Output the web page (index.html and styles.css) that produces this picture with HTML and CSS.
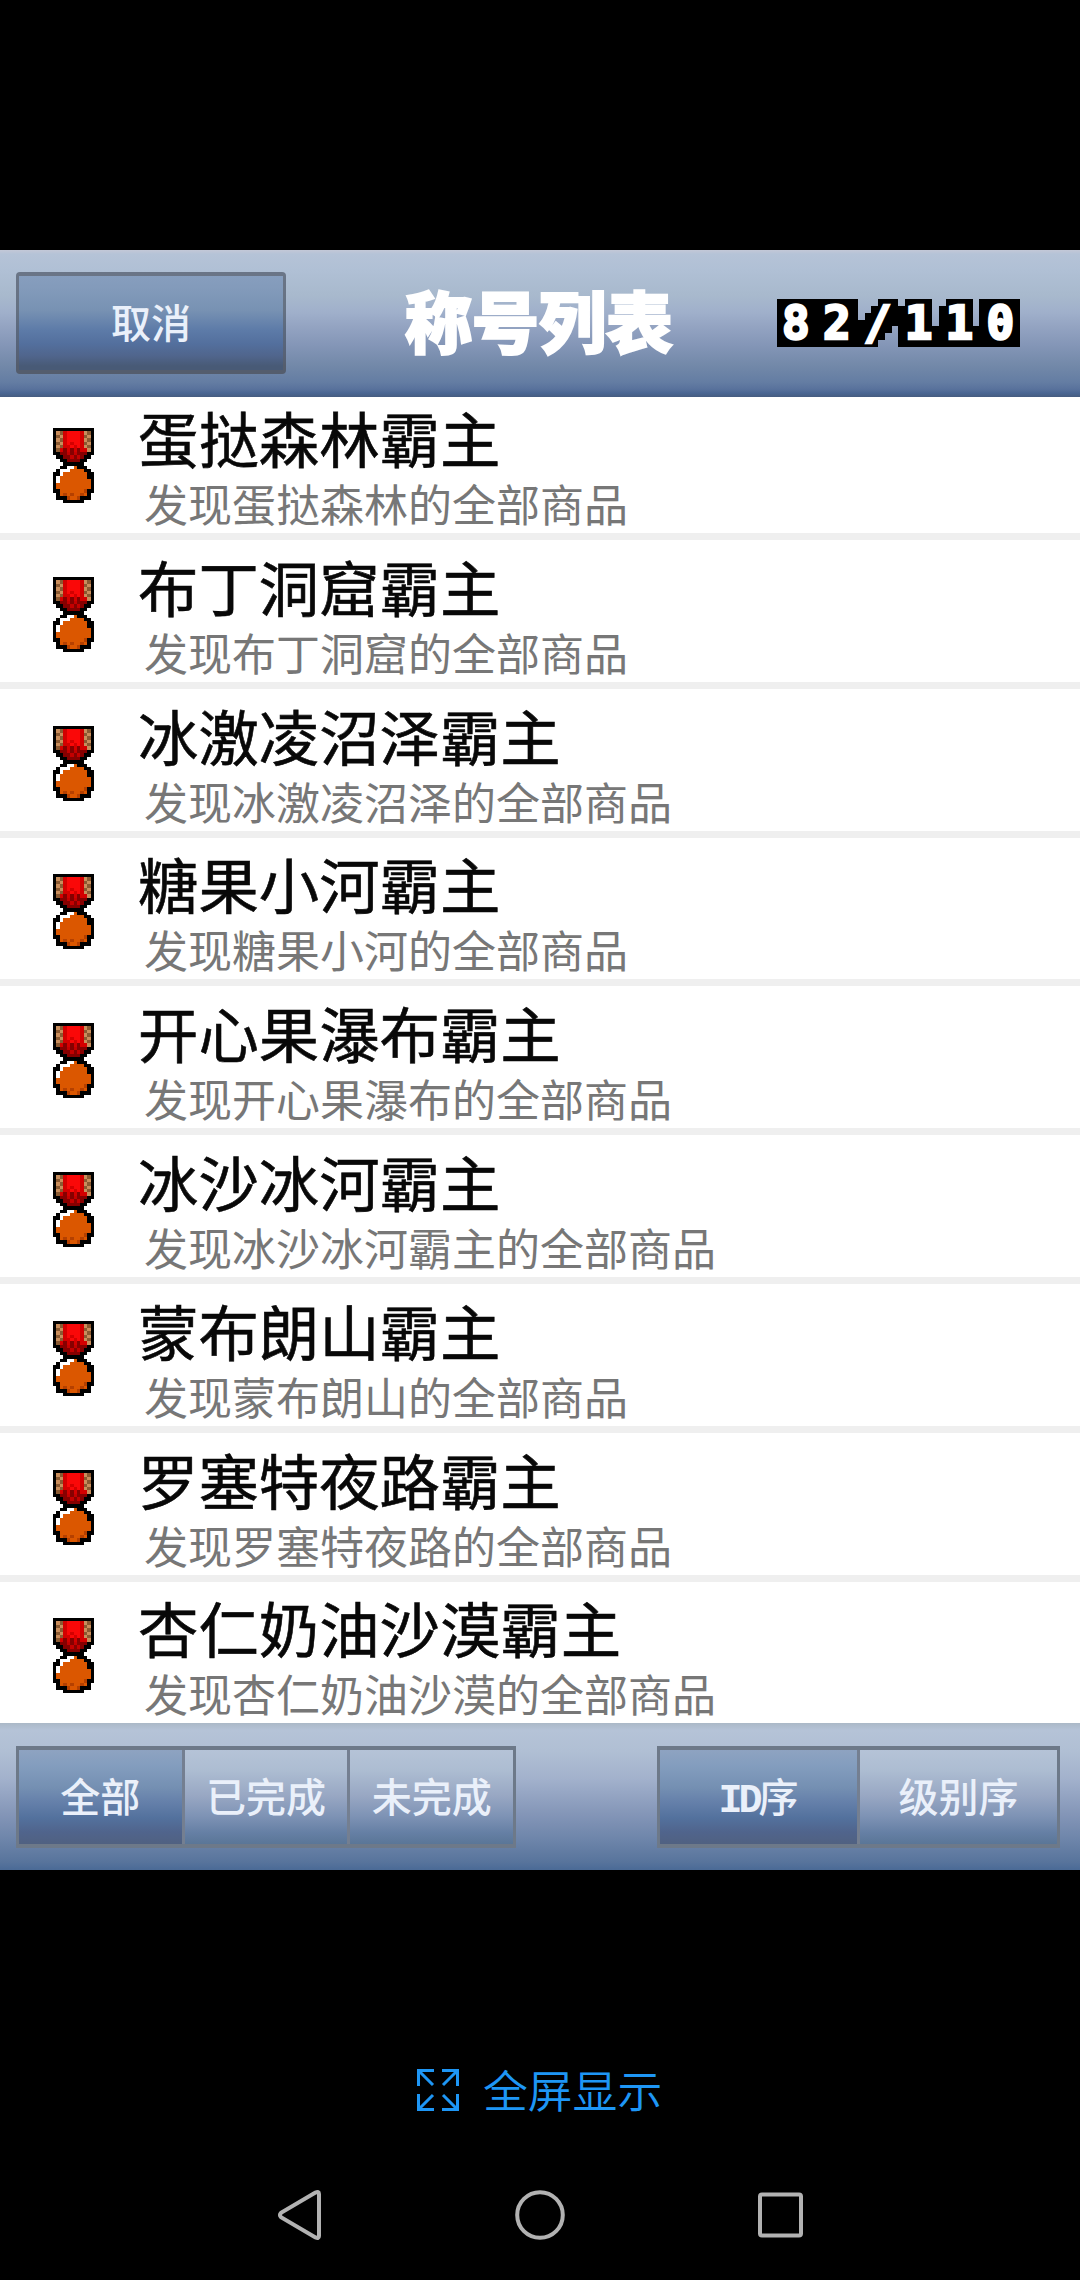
FILE: index.html
```html
<!DOCTYPE html>
<html lang="zh-CN">
<head>
<meta charset="utf-8">
<title>称号列表</title>
<link rel="stylesheet" href="styles.css">
</head>
<body>
<svg class="defs" width="0" height="0" aria-hidden="true">
<symbol id="medal" viewBox="0 0 12 22" preserveAspectRatio="none" shape-rendering="crispEdges">
<path fill="#000" d="M0 0h12v8h-1v1h-1v1H9v1h1v1h1v1h1v6h-1v2h-2v1H3v-1H1v-2H0v-6h1v-1h1v-1h1v-1H2V9H1V8H0z"/>
<path fill="#fa0808" d="M3 1h6v6H3z"/>
<path fill="#c98e5c" d="M1 1h2v5H2v1H1zM9 1h2v6h-1V6H9z"/>
<path fill="#8a5a32" d="M2 1h1v1H2zM1 2h1v1H1zM2 3h1v1H2zM1 4h1v1H1zM2 5h1v1H2zM1 6h1v1H1zM10 1h1v1h-1zM9 2h1v1H9zM10 3h1v1h-1zM9 4h1v1H9zM10 5h1v1h-1z"/>
<path fill="#d40000" d="M3 1h1v5H3zM8 1h1v5H8zM5 4h1v1H5zM4 5h1v1H4zM6 5h1v1H6zM2 6h8v1H2z"/>
<path fill="#860000" d="M3 6h1v1H3zM5 6h1v1H5zM7 6h1v1H7zM2 7h8v1H9v1H8v1H4V9H3V8H2z"/>
<path fill="#c40000" d="M4 7h1v1H4zM6 7h1v1H6zM5 8h1v1H5zM7 8h1v1H7z"/>
<path fill="#db5700" d="M4 12h5v1h1v2h1v3h-1v2H8v1H4v-1H2v-2H1v-4h1v-1h2zM6 11h1v1H6z"/>
<path fill="#fff" d="M4 11h2v1H4zM2 12h3v1H2zM2 13h1v1H2zM1 14h1v2H1z"/>
<path fill="#b54000" d="M4 20h1v1H4zM5 19h1v1H5zM7 20h1v1H7zM9 18h1v1H9zM8 19h1v1H8zM3 19h1v1H3z"/>
</symbol>
</svg>
<header class="bar top">
<button class="cancel">取消</button>
<h1>称号列表</h1>
<div class="count">82/110</div>
</header>
<main class="list">
<section class="row"><svg class="medal"><use href="#medal"/></svg><div><h2>蛋挞森林霸主</h2><p>发现蛋挞森林的全部商品</p></div></section>
<section class="row"><svg class="medal"><use href="#medal"/></svg><div><h2>布丁洞窟霸主</h2><p>发现布丁洞窟的全部商品</p></div></section>
<section class="row"><svg class="medal"><use href="#medal"/></svg><div><h2>冰激凌沼泽霸主</h2><p>发现冰激凌沼泽的全部商品</p></div></section>
<section class="row"><svg class="medal"><use href="#medal"/></svg><div><h2>糖果小河霸主</h2><p>发现糖果小河的全部商品</p></div></section>
<section class="row"><svg class="medal"><use href="#medal"/></svg><div><h2>开心果瀑布霸主</h2><p>发现开心果瀑布的全部商品</p></div></section>
<section class="row"><svg class="medal"><use href="#medal"/></svg><div><h2>冰沙冰河霸主</h2><p>发现冰沙冰河霸主的全部商品</p></div></section>
<section class="row"><svg class="medal"><use href="#medal"/></svg><div><h2>蒙布朗山霸主</h2><p>发现蒙布朗山的全部商品</p></div></section>
<section class="row"><svg class="medal"><use href="#medal"/></svg><div><h2>罗塞特夜路霸主</h2><p>发现罗塞特夜路的全部商品</p></div></section>
<section class="row"><svg class="medal"><use href="#medal"/></svg><div><h2>杏仁奶油沙漠霸主</h2><p>发现杏仁奶油沙漠的全部商品</p></div></section>
</main>
<footer class="bar bottom">
<div class="tabs filter"><button class="on">全部</button><button>已完成</button><button>未完成</button></div>
<div class="tabs sort"><button class="on"><span class="latin">ID</span>序</button><button>级别序</button></div>
</footer>
<div class="full">
<svg width="42" height="42" viewBox="0 0 42 42" fill="none" stroke="#1e96f5" stroke-width="3"><path d="M1.500 17V1.500H17M1.500 1.500L16 16M25 1.500H40.500V17M40.500 1.500L26 16M1.500 25V40.500H17M1.500 40.500L16 26M25 40.500H40.500V25M40.500 40.500L26 26"/></svg>
<span>全屏显示</span>
</div>
<nav class="nav">
<svg width="50" height="54" viewBox="0 0 50 54"><path d="M43.500 4.600L9 24.800Q7 27 9 29.200L43.500 49.400Q47 51 47 48V6Q47 3 43.500 4.600Z"/></svg>
<svg width="54" height="54" viewBox="0 0 54 54"><ellipse cx="27" cy="27" rx="22.800" ry="22.800"/></svg>
<svg width="50" height="54" viewBox="0 0 50 54"><rect x="2" y="6.500" width="41" height="41" rx="2"/></svg>
</nav>
</body>
</html>
```
FILE: styles.css
```css
* { box-sizing: border-box; }
body {
  margin: 0;
  width: 1080px;
  height: 2280px;
  padding-top: 250px;
  background: #000;
  overflow: hidden;
  font-family: "Noto Sans CJK SC", sans-serif;
}
.defs { display: block; height: 0; }
h1, h2, p { margin: 0; }
button {
  margin: 0;
  padding: 0 0 4px;
  border: 0;
  background: none;
  color: #eaf0fa;
  font: 500 40px/1 "Noto Sans CJK SC", sans-serif;
}
.bar { display: flex; align-items: flex-start; }
.top {
  height: 147px;
  padding: 22px 0 0 16px;
  background: linear-gradient(#c3c8d7 0, #b5c3d7 4px, #b0c0d5 20px, #a8b9cd 45px, #a0b0cb 62px, #94a4c2 76px, #8496b7 95px, #7389a9 115px, #647da3 132px, #59729c 139px, #4a6693 143px, #465c80 147px);
}
.cancel {
  width: 270px;
  height: 102px;
  border: 3px solid rgba(90, 96, 105, .65);
  border-width: 4px 3px;
  border-radius: 4px;
  background: linear-gradient(#889fbf 0, #829aba 18px, #7892b3 38px, #5d7ba8 58px, #536f9d 72px, #50658c 84px, #485a76 94px) border-box;
}
.top h1 {
  width: 270px;
  margin: 12px 0 0 119px;
  color: #fff;
  font-size: 67px;
  line-height: 70px;
  font-weight: 900;
  -webkit-text-stroke: 2px #fff;
  white-space: nowrap;
}
.count {
  width: 243px;
  height: 48px;
  margin: 27px 0 0 102px;
  padding-left: 5px;
  color: #fff;
  background: #000;
  font: bold 46px/48px "DejaVu Sans Mono", monospace;
  letter-spacing: 13.200px;
  white-space: nowrap;
  -webkit-text-stroke: 2.500px #fff;
  clip-path: polygon(0 0, 81px 0, 81px 21px, 88px 21px, 88px 14px, 94px 14px, 94px 7px, 101px 7px, 101px 0, 121px 0, 121px 7px, 128px 7px, 128px 0, 155px 0, 155px 27px, 162px 27px, 162px 7px, 169px 7px, 169px 0, 196px 0, 196px 27px, 202px 27px, 202px 0, 243px 0, 243px 48px, 121px 48px, 121px 27px, 115px 27px, 115px 34px, 108px 34px, 108px 41px, 101px 41px, 101px 48px, 0 48px);
}
.list { height: 1326px; overflow: hidden; background: #fff; }
.row {
  display: flex;
  height: 148.800px;
  padding: 36.800px 0 0 53px;
  border-bottom: 7px solid #efefef;
}
.row:first-child { height: 143px; padding-top: 31px; }
.medal { width: 41px; height: 75px; margin-right: 44px; flex: none; }
.row div { margin-top: -27px; }
.row h2 { color: #080808; font-size: 60.400px; line-height: 72px; font-weight: 400; -webkit-text-stroke: .6px #080808; white-space: nowrap; }
.row p { margin: 0 0 0 6px; color: #777; font-size: 44px; line-height: 60px; white-space: nowrap; }
.bottom {
  height: 147px;
  padding: 23px 20px 0 16px;
  justify-content: space-between;
  background: linear-gradient(#aab8c7 0, #b5c3d7 7px, #b0bfd4 28px, #a2b1cc 56px, #8395b7 92px, #6c84a9 118px, #58749c 139px, #4a6a96 147px);
}
.tabs { display: flex; height: 102px; border: 4px solid #6d7989; border-width: 4px 3px; }
.tabs button { flex: 1; background: linear-gradient(#b5c3d7 0, #adbdd2 20px, #98a7c3 46px, #7e93b5 66px, #657fa4 83px, #5a7697 94px); }
.tabs button + button { border-left: 3px solid #747f91; }
.tabs .on { background: linear-gradient(#8ea3c1 0, #839dbe 16px, #748fb2 38px, #6580aa 52px, #53719d 68px, #50648c 82px, #506181 94px); }
.filter { width: 500px; }
.sort { width: 403px; }
.latin { font: bold 40px/0 "Liberation Mono", monospace; letter-spacing: -4px; }
.full {
  display: flex;
  align-items: center;
  height: 70px;
  margin: 185px 0 0 417px;
  gap: 24px;
  color: #1e96f5;
  font-size: 44.800px;
  line-height: 66px;
  font-weight: 350;
}
.full span { margin-top: -2px; }
.nav { display: flex; justify-content: space-between; width: 536px; margin: 63px 0 0 272px; }
.nav svg { fill: none; stroke: #b2b2b2; stroke-width: 4; }
```
